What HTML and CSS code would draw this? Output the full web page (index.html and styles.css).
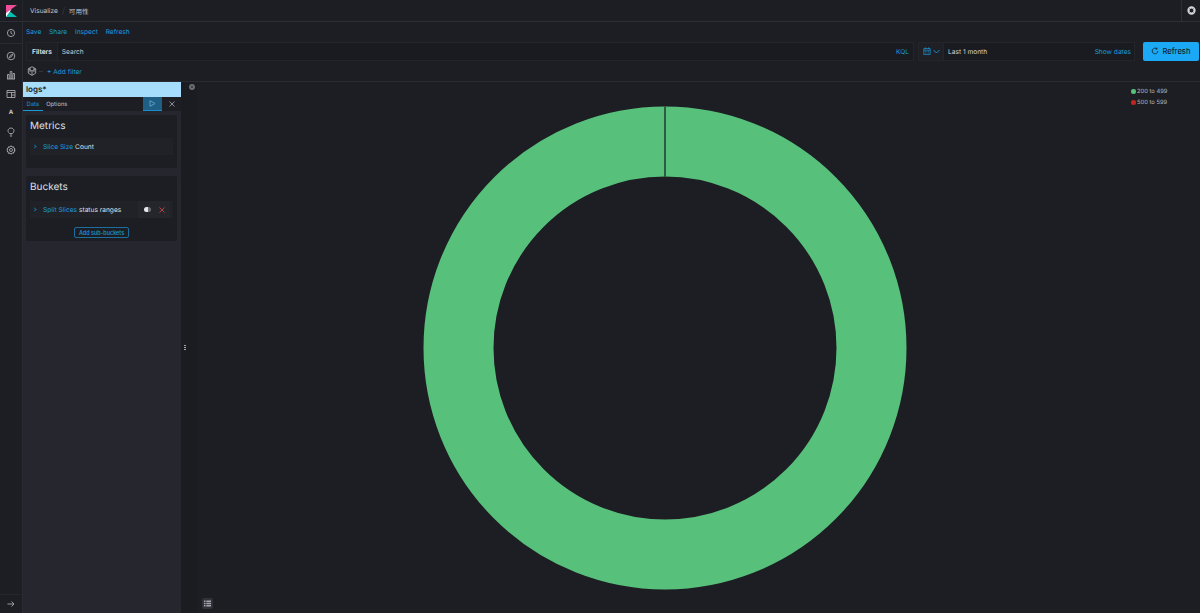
FILE: index.html
```html
<!DOCTYPE html>
<html lang="ja">
<head>
    <meta charset="UTF-8">
    <title>Visualize - 可用性</title>
    <link rel="stylesheet" href="styles.css">
</head>
<body>
<header class="topbar">
    <div class="logo-cell">
        <svg width="11" height="12" viewBox="0 0 11 12">
            <polygon points="0,0 11,0 0,8" fill="#f04e98"/>
            <polygon points="0,12 4,6.5 11,12" fill="#00bfb3"/>
            <polygon points="0,8 5.5,4 4,6.5 0,12" fill="#fff"/>
        </svg>
    </div>
    <nav class="crumbs">
        <span>Visualize</span>
        <span class="crumb-sep"></span>
        <span>可用性</span>
    </nav>
    <div class="help-cell">
        <svg width="9" height="9" viewBox="0 0 10 10">
            <circle cx="5" cy="5" r="3.4" fill="none" stroke="#d4d5da" stroke-width="2.4"/>
            <path d="M2 5h6M5 2v6" stroke="#1d1e24" stroke-width="0.8" transform="rotate(45 5 5)"/>
        </svg>
    </div>
</header>

<div class="app">
    <aside class="sidenav">
        <div class="nav-group nav-recent">
            <svg class="nav-icon" viewBox="0 0 10 10"><circle cx="5" cy="5" r="3.6"/><path d="M5 3v2.2l1.5 1"/></svg>
        </div>
        <div class="nav-group nav-apps">
            <svg class="nav-icon" viewBox="0 0 10 10"><circle cx="5" cy="5" r="3.8"/><path d="M6.8 3.2L5.6 5.6 3.2 6.8 4.4 4.4z"/></svg>
            <svg class="nav-icon" viewBox="0 0 10 10"><path d="M1 9h8M1.5 9V4.5h1.6V9M4.2 9V1.5h1.6V9M6.9 9V3.5h1.6V9"/></svg>
            <svg class="nav-icon" viewBox="0 0 10 10"><path d="M1 1.5h8v7H1zM1 3.5h8M5.5 3.5v5M5.5 6h3.5"/></svg>
            <span class="nav-letter">A</span>
            <svg class="nav-icon" viewBox="0 0 10 10"><path d="M3.5 6.5C2.5 5.6 2 4.8 2 3.8 2 2.3 3.3 1 5 1s3 1.3 3 2.8c0 1-.5 1.8-1.5 2.700zM3.8 8h2.400M4.300 9.300h1.400"/></svg>
            <svg class="nav-icon" viewBox="0 0 10 10"><circle cx="5" cy="5" r="1.500"/><circle cx="5" cy="5" r="3.700" stroke-dasharray="1.800 .5" stroke-width="1.300"/></svg>
        </div>
        <div class="nav-foot">
            <svg class="nav-icon" viewBox="0 0 10 10"><path d="M1.500 5h6.500M5.500 2.500L8 5 5.500 7.500"/></svg>
        </div>
    </aside>

    <main class="content">
        <div class="links-row">
            <a>Save</a>
            <a>Share</a>
            <a>Inspect</a>
            <a>Refresh</a>
        </div>

        <div class="query-row">
            <div class="query-box">
                <span class="filters-label">Filters</span>
                <span class="search-text">Search</span>
                <span class="kql">KQL</span>
            </div>
            <div class="date-box">
                <span class="date-btn">
                    <svg width="8" height="8" viewBox="0 0 10 10" fill="none" stroke="#1a8ecb"><path d="M1 2h8v7.500H1zM1 4h8M3 .5v2M7 .5v2"/><path d="M2.500 5.500h5M2.500 7.500h5" stroke-dasharray="1 1"/></svg>
                    <svg width="7" height="5" viewBox="0 0 7 5" fill="none" stroke="#1a8ecb"><path d="M.5 1l3 3 3-3"/></svg>
                </span>
                <span class="date-text">Last 1 month</span>
                <span class="show-dates">Show dates</span>
            </div>
            <button class="refresh-btn">
                <svg width="8" height="8" viewBox="0 0 10 10" fill="none" stroke="#11232e" stroke-width="1.100"><path d="M8.500 5a3.500 3.500 0 1 1-1.200-2.700M7.500 .8v1.800H5.700"/></svg>
                Refresh
            </button>
        </div>

        <div class="filter-row">
            <svg width="10" height="10" viewBox="0 0 10 10" fill="none" stroke="#a5a7ae" stroke-width=".9"><path d="M5 .7l3.700 2.100v4.400L5 9.300 1.300 7.200V2.800z"/><path d="M1.300 2.800L5 5l3.700-2.200M5 5v4.300M3 1.800v4.400M7 1.800v4.400"/></svg>
            <span class="filter-dash"></span>
            <a>+ Add filter</a>
        </div>

        <div class="workspace">
            <section class="editor">
                <div class="index-bar">logs*</div>
                <div class="tabs">
                    <span class="tab tab-active">Data</span>
                    <span class="tab">Options</span>
                    <span class="tabs-actions">
                        <span class="run-btn">
                            <svg width="7" height="7" viewBox="0 0 7 7" fill="none" stroke="#5a9dc2"><path d="M1 .7l5 2.800-5 2.800z"/></svg>
                        </span>
                        <span class="discard-btn">
                            <svg width="6" height="6" viewBox="0 0 6 6" stroke="#8b8d94"><path d="M.5.5l5 5M5.500.5l-5 5"/></svg>
                        </span>
                    </span>
                </div>

                <div class="panel panel-metrics">
                    <h2>Metrics</h2>
                    <div class="agg-row">
                        <span class="chev"></span>
                        <span class="agg-name">Slice Size</span>
                        <span class="agg-value">Count</span>
                    </div>
                </div>

                <div class="panel panel-buckets">
                    <h2>Buckets</h2>
                    <div class="agg-row">
                        <span class="chev"></span>
                        <span class="agg-name">Split Slices</span>
                        <span class="agg-value">status ranges</span>
                        <span class="agg-actions">
                            <span class="toggle"></span>
                            <svg width="6" height="6" viewBox="0 0 6 6" stroke="#b4433f"><path d="M.5.5l5 5M5.500.5l-5 5"/></svg>
                        </span>
                    </div>
                    <div class="add-wrap">
                        <button class="add-btn">Add sub-buckets</button>
                    </div>
                </div>
            </section>

            <div class="resizer"><span></span><span></span><span></span></div>

            <section class="vis">
                <div class="collapse-strip">
                    <span class="collapse-btn"></span>
                </div>
                <div class="chart-wrap">
                    <svg class="donut" width="484" height="484" viewBox="0 0 484 484">
                        <circle cx="242" cy="242" r="206.500" fill="none" stroke="#57c17b" stroke-width="70"/>
                        <rect x="241" y="0" width="2" height="71" fill="#2d5b43"/>
                    </svg>
                    <button class="table-btn">
                        <svg width="7" height="7" viewBox="0 0 7 7" fill="#a5a7ae"><path d="M0 .5h1.500v1.500H0zM0 2.800h1.500v1.500H0zM0 5h1.500v1.500H0zM2.300.5H7v1.500H2.300zM2.300 2.800H7v1.500H2.300zM2.300 5H7v1.500H2.300z"/></svg>
                    </button>
                </div>
                <ul class="legend">
                    <li><span class="dot dot-ok"></span>200 to 499</li>
                    <li><span class="dot dot-err"></span>500 to 599</li>
                </ul>
            </section>
        </div>
    </main>
</div>
</body>
</html>
```

FILE: styles.css
```css
* {
    box-sizing: border-box;
}
html, body {
    height: 100%;
}
body {
    margin: 0;
    background-color: #1d1e24;
    color: #dfe0e4;
    font-family: Inter, "Noto Sans CJK JP", sans-serif;
    font-size: 6.6px;
    text-rendering: geometricPrecision;
    overflow: hidden;
    display: flex;
    flex-direction: column;
}
a {
    color: #1a9ad9;
}

/* top header */
.topbar {
    height: 22px;
    display: flex;
    align-items: center;
    border-bottom: 1px solid #2d2e36;
    background-color: #1d1e24;
}
.logo-cell {
    width: 23px;
    height: 100%;
    display: flex;
    align-items: center;
    justify-content: center;
    border-right: 1px solid #25262d;
}
.crumbs {
    display: flex;
    align-items: center;
    margin-left: 7px;
    flex: 1;
    color: #c3c5cb;
}
.crumb-sep {
    width: 1px;
    height: 8px;
    margin: 0 5px;
    background-color: #2f3038;
    transform: rotate(15deg);
}
.help-cell {
    width: 19px;
    height: 100%;
    display: flex;
    align-items: center;
    justify-content: center;
    border-left: 1px solid #2d2e36;
}

.app {
    flex: 1;
    display: flex;
    min-height: 0;
}

/* left nav */
.sidenav {
    width: 23px;
    display: flex;
    flex-direction: column;
    align-items: center;
    background-color: #1d1e24;
    border-right: 1px solid #2a2b32;
}
.nav-group {
    width: 100%;
    display: flex;
    flex-direction: column;
    align-items: center;
}
.nav-recent {
    height: 22px;
    justify-content: center;
    border-bottom: 1px solid #2a2b32;
}
.nav-apps {
    padding-top: 7px;
    gap: 8.9px;
}
.nav-icon {
    width: 10px;
    height: 10px;
    fill: none;
    stroke: #a5a7ae;
    stroke-width: .9;
}
.nav-letter {
    width: 10px;
    height: 10px;
    display: flex;
    align-items: center;
    justify-content: center;
    font-size: 6px;
    font-weight: 700;
    color: #c8cad0;
}
.nav-foot {
    margin-top: auto;
    width: 100%;
    height: 19px;
    display: flex;
    align-items: center;
    justify-content: center;
    border-top: 1px solid #25262d;
}

.content {
    flex: 1;
    min-width: 0;
    display: flex;
    flex-direction: column;
}

/* save/share links */
.links-row {
    height: 19px;
    display: flex;
    align-items: center;
    gap: 7.8px;
    padding-left: 3px;
}

/* query bar */
.query-row {
    height: 20px;
    display: flex;
    align-items: center;
    padding: 0 1px 0 3px;
}
.query-box {
    flex: 1;
    height: 19px;
    display: flex;
    align-items: center;
    background-color: #1a1b20;
    border: 1px solid #24252b;
}
.filters-label {
    height: 100%;
    display: flex;
    align-items: center;
    padding: 1px 5px 0;
    font-weight: 600;
    color: #e6e7ea;
    background-color: #1d1e24;
    border-right: 1px solid #24252b;
}
.search-text {
    margin-left: 4px;
    padding-top: 1px;
    flex: 1;
    color: #c3c5cb;
}
.kql {
    margin-right: 4px;
    padding-top: 1px;
    color: #1a9ad9;
}
.date-box {
    width: 217px;
    height: 19px;
    margin-left: 4px;
    display: flex;
    align-items: center;
    background-color: #1a1b20;
    border: 1px solid #24252b;
}
.date-btn {
    height: 100%;
    width: 25px;
    display: flex;
    align-items: center;
    justify-content: center;
    gap: 2px;
    background-color: #1f2026;
    border-right: 1px solid #24252b;
}
.date-text {
    flex: 1;
    margin-left: 4px;
    padding-top: 1px;
    color: #d4d5da;
}
.show-dates {
    margin-right: 3px;
    padding-top: 1px;
    color: #1a9ad9;
}
.refresh-btn {
    width: 56px;
    height: 19px;
    margin-left: 8px;
    border: 0;
    border-radius: 2px;
    display: flex;
    align-items: center;
    justify-content: center;
    gap: 3px;
    background-color: #1ba9f5;
    color: #11232e;
    font: 500 7.6px Inter, sans-serif;
}

/* filter bar */
.filter-row {
    height: 21px;
    display: flex;
    align-items: center;
    padding-left: 4px;
    border-bottom: 1px solid #2a2b32;
}
.filter-row a {
    padding-top: 1px;
}
.filter-dash {
    width: 4px;
    height: 1px;
    margin: 0 4px 0 2px;
    background-color: #33343c;
}

.workspace {
    flex: 1;
    display: flex;
    min-height: 0;
}

/* editor sidebar */
.editor {
    width: 158px;
    background-color: #25262e;
}
.index-bar {
    height: 15px;
    padding: 0 3px 2px;
    display: flex;
    align-items: center;
    background-color: #a6dcfc;
    color: #1a1c21;
    font-size: 8px;
    font-weight: 600;
}
.tabs {
    height: 14px;
    display: flex;
    align-items: stretch;
    background-color: #1d1e24;
}
.tab {
    display: flex;
    align-items: center;
    padding: 1px 3.5px 0;
    font-size: 5.8px;
    color: #c3c5cb;
}
.tab-active {
    color: #1a9ad9;
    border-bottom: 1px solid #1a9ad9;
}
.tabs-actions {
    margin-left: auto;
    display: flex;
    align-items: stretch;
}
.run-btn {
    width: 19px;
    display: flex;
    align-items: center;
    justify-content: center;
    background-color: #1f5f86;
    border-bottom: 1px solid #1a8ecb;
}
.discard-btn {
    width: 19px;
    display: flex;
    align-items: center;
    justify-content: center;
}
.panel {
    margin: 0 4px 8px 3px;
    padding: 5px 4px 0;
    background-color: #1d1e24;
    border-radius: 2px;
}
.panel h2 {
    margin: 0 0 6px;
    font-size: 10px;
    line-height: 12px;
    font-weight: 400;
    color: #dfe0e4;
}
.panel-metrics {
    height: 53px;
    margin-top: 4px;
}
.panel-buckets {
    height: 65px;
}
.panel-buckets h2 {
    margin-bottom: 8px;
}
.agg-row {
    height: 17px;
    display: flex;
    align-items: center;
    gap: 2px;
    padding-left: 3px;
    background-color: #212228;
}
.chev {
    width: 3px;
    height: 3px;
    margin-right: 5px;
    border-top: 1px solid #1a6f9e;
    border-right: 1px solid #1a6f9e;
    transform: rotate(45deg);
}
.agg-name {
    color: #1a9ad9;
}
.agg-value {
    color: #dfe0e4;
}
.agg-actions {
    margin-left: auto;
    margin-right: 3px;
    display: flex;
    align-items: center;
    gap: 8px;
    height: 100%;
    padding: 0 5px 0 6px;
    background-color: #25262c;
}
.toggle {
    width: 7px;
    height: 5px;
    border-radius: 3px;
    background: linear-gradient(90deg, #e6e7ea 55%, #6a6c73 55%);
}
.add-wrap {
    display: flex;
    justify-content: center;
    margin-top: 9px;
}
.add-btn {
    height: 11px;
    padding: 0 4px;
    border: 1px solid #1a6f9e;
    border-radius: 2px;
    background-color: #1d1e24;
    color: #1a9ad9;
    font: 500 5.5px Inter, sans-serif;
}

/* drag handle between editor and chart */
.resizer {
    width: 7px;
    display: flex;
    flex-direction: column;
    align-items: center;
    justify-content: center;
    gap: 1px;
    background-color: #1b1c21;
}
.resizer span {
    width: 2px;
    height: 1px;
    background-color: #a5a7ae;
}

/* chart */
.vis {
    flex: 1;
    min-width: 0;
    display: flex;
}
.collapse-strip {
    width: 9px;
    padding: 2px 1px 0 0;
    display: flex;
    justify-content: center;
    background-color: #1b1c21;
}
.collapse-btn {
    width: 6px;
    height: 6px;
    border-radius: 50%;
    border: 2px solid #6a6c73;
    background-color: #35363d;
}
.chart-wrap {
    flex: 1;
    position: relative;
    display: flex;
    align-items: center;
    justify-content: center;
}
.donut {
    display: block;
    margin-left: 2px;
}
.table-btn {
    position: absolute;
    left: 5px;
    bottom: 4px;
    width: 11px;
    height: 11px;
    padding: 0;
    border: 0;
    border-radius: 2px;
    display: flex;
    align-items: center;
    justify-content: center;
    background-color: #303139;
}
.legend {
    width: 69px;
    margin: 0;
    padding: 4px 0 0;
    list-style: none;
    color: #b5b7bd;
    font-size: 5.8px;
}
.legend li {
    height: 11px;
    display: flex;
    align-items: center;
    gap: 1.5px;
}
.dot {
    width: 4.5px;
    height: 4.5px;
    border-radius: 50%;
}
.dot-ok {
    background-color: #57c17b;
}
.dot-err {
    background-color: #bd271e;
}
```
